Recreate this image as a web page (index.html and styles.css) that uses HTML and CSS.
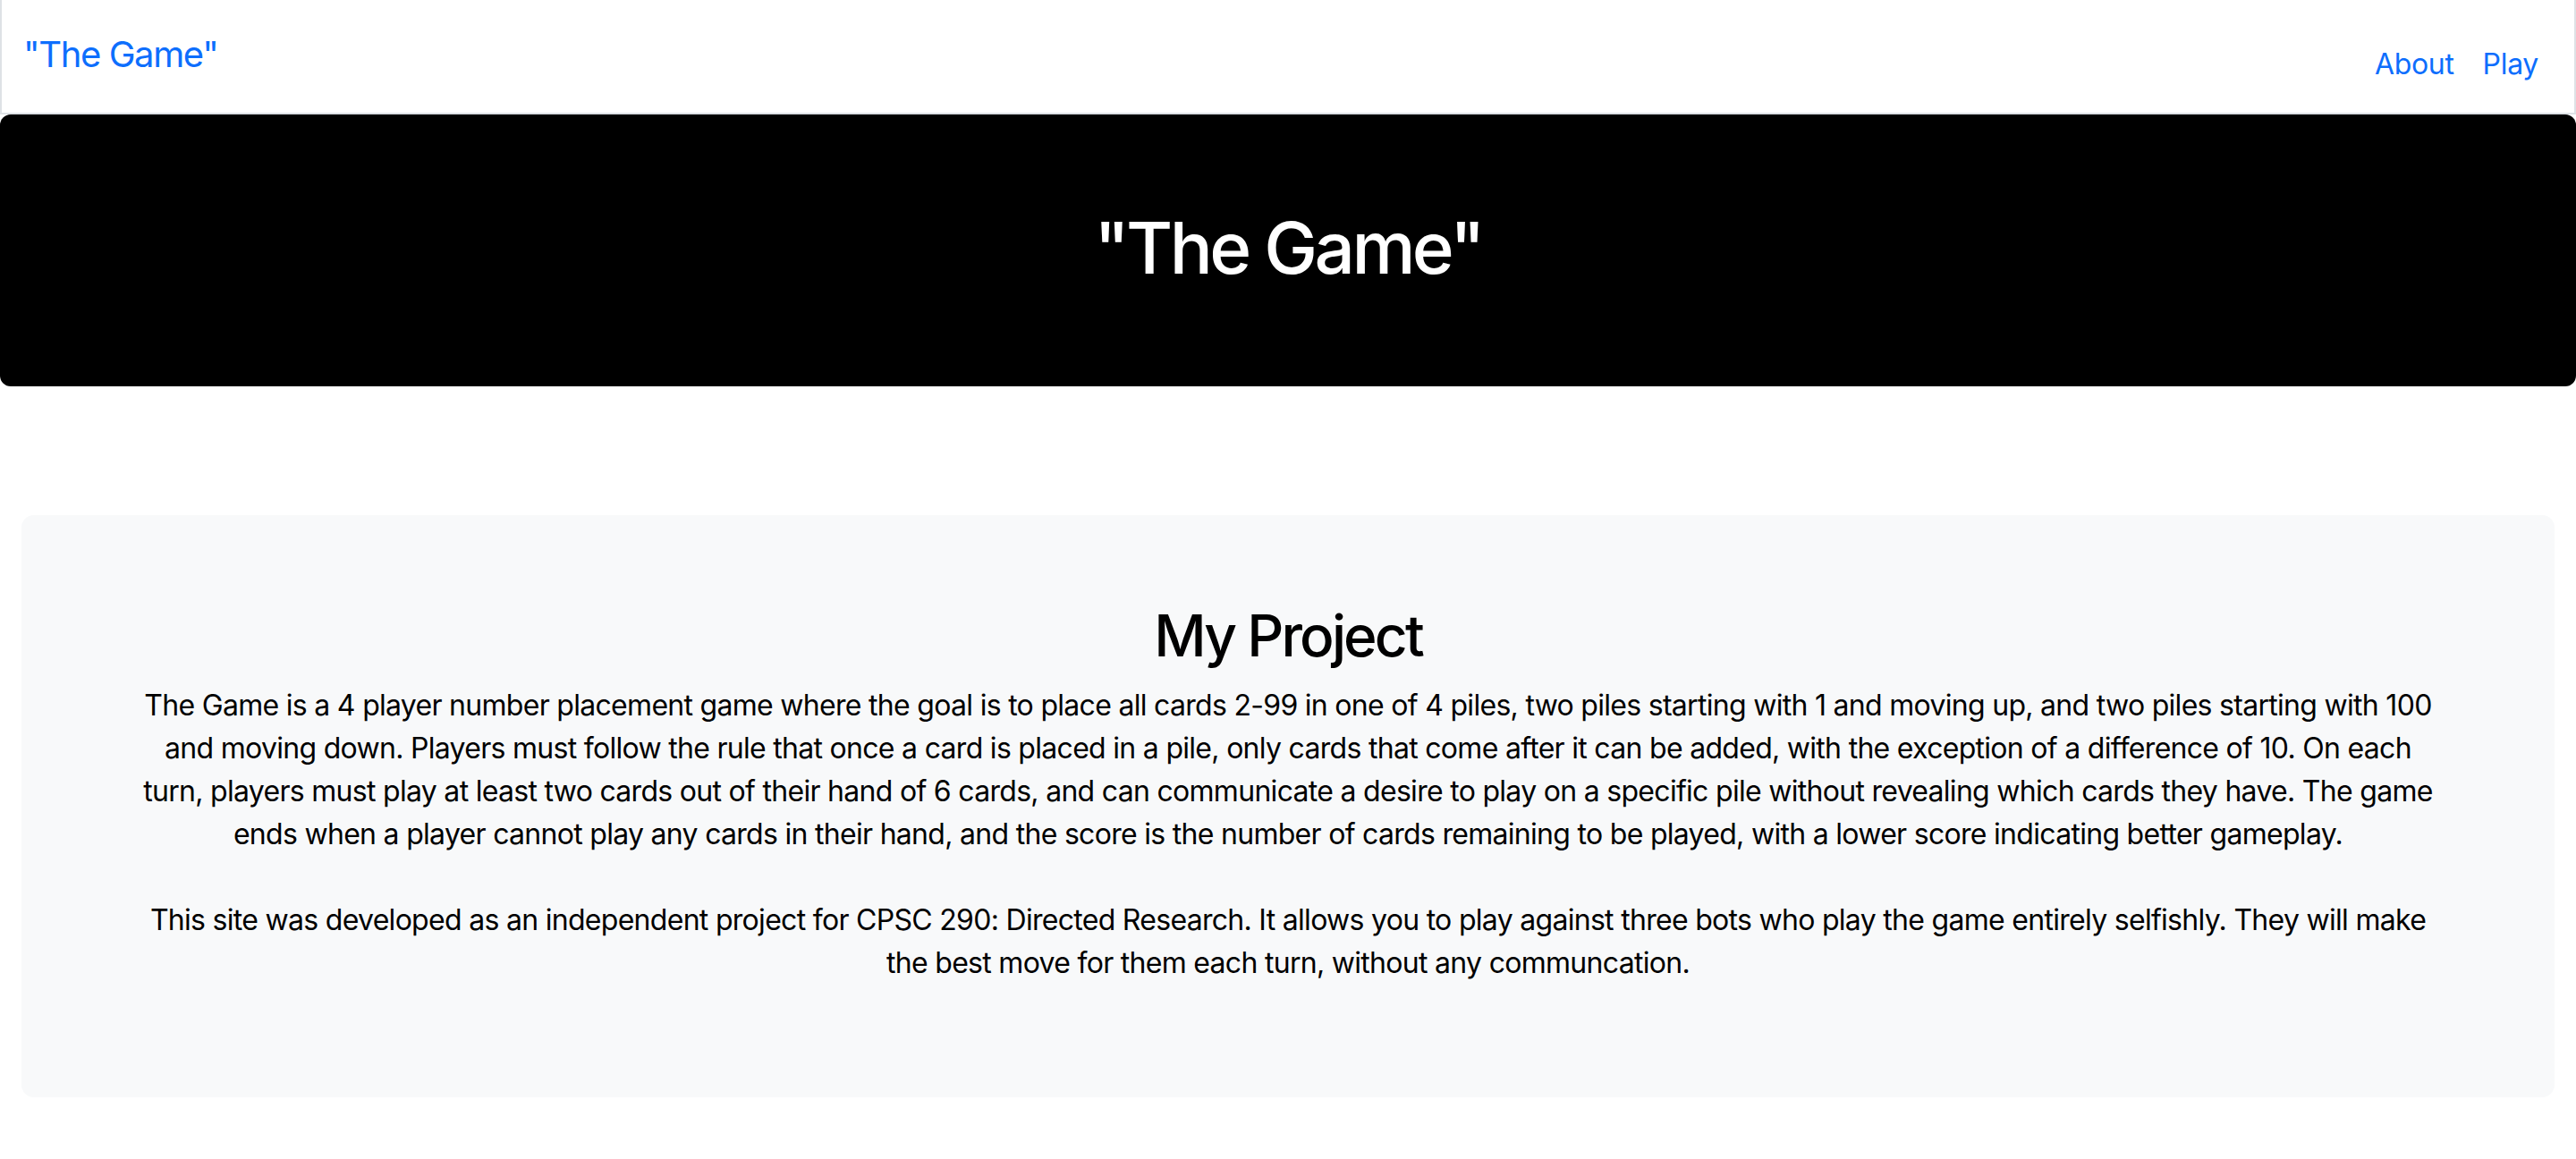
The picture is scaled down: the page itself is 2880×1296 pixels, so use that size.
FILE: index.html
```html
<!DOCTYPE html>
<html lang="en">
<head>
<meta charset="utf-8">
<title>"The Game"</title>
<link rel="stylesheet" href="styles.css">
</head>
<body>
<nav class="navbar">
  <a class="brand" href="#">"The Game"</a>
  <ul class="nav-links">
    <li><a class="nav-link" href="#">About</a></li>
    <li><a class="nav-link" href="#">Play</a></li>
  </ul>
</nav>
<header class="hero">
  <h1 class="hero-title">"The Game"</h1>
</header>
<main class="container">
  <section class="panel">
    <h2 class="panel-title">My Project</h2>
    <p class="panel-text">The Game is a 4 player number placement game where the goal is to place all cards 2-99 in one of 4 piles, two piles starting with 1 and moving up, and two piles starting with 100 and moving down. Players must follow the rule that once a card is placed in a pile, only cards that come after it can be added, with the exception of a difference of 10. On each turn, players must play at least two cards out of their hand of 6 cards, and can communicate a desire to play on a specific pile without revealing which cards they have. The game ends when a player cannot play any cards in their hand, and the score is the number of cards remaining to be played, with a lower score indicating better gameplay.</p>
    <p class="panel-text">This site was developed as an independent project for CPSC 290: Directed Research. It allows you to play against three bots who play the game entirely selfishly. They will make the best move for them each turn, without any communcation.</p>
  </section>
</main>
</body>
</html>
```

FILE: styles.css
```css
* { box-sizing: border-box; }
html, body { margin: 0; padding: 0; }
body {
  font-family: Inter, "Noto Sans", "Liberation Sans", sans-serif;
  font-size: 32px;
  line-height: 1.5;
  color: #000;
  background: #fff;
}
a { text-decoration: none; color: #0d6efd; }

.navbar {
  height: 128px;
  display: flex;
  justify-content: space-between;
  align-items: center;
  padding: 0 24px;
  border: 2px solid #dee2e6;
  border-top: none;
}
.brand {
  font-size: 40px;
  line-height: 60px;
  margin-top: -4px;
  letter-spacing: -0.035em;
}
.nav-links {
  list-style: none;
  display: flex;
  margin: 0;
  padding: 18px 0 0;
}
.nav-link {
  display: block;
  padding: 8px 16px;
  font-size: 32px;
  line-height: 48px;
  letter-spacing: -0.01em;
}

.hero {
  background: #000;
  color: #fff;
  border-radius: 12px;
  padding: 96px 0 102px;
  text-align: center;
}
.hero-title {
  margin: 0;
  font-size: 80px;
  line-height: 106px;
  font-weight: 500;
  letter-spacing: -0.045em;
}

.container {
  padding: 144px 24px 0;
}
.panel {
  background: #f8f9fa;
  border-radius: 14px;
  padding: 96px 128px 78px;
  text-align: center;
}
.panel-title {
  margin: 0 0 16px;
  font-size: 64px;
  line-height: 77px;
  font-weight: 500;
  letter-spacing: -0.045em;
}
.panel-text {
  margin: 0 0 48px;
  letter-spacing: -0.022em;
}
```
